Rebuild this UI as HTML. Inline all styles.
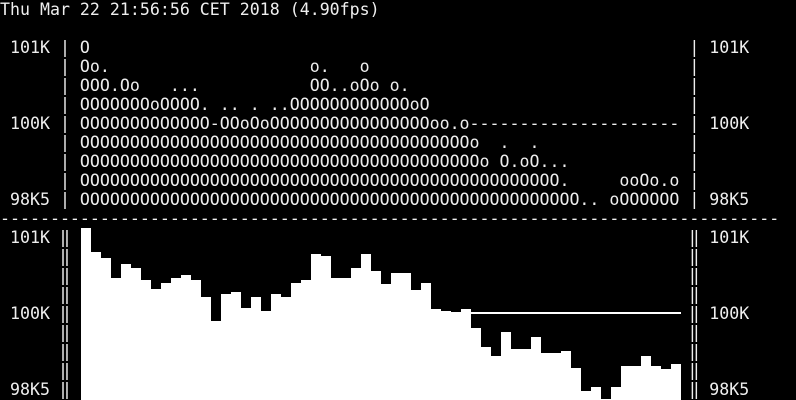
<!DOCTYPE html>
<html><head><meta charset="utf-8"><style>
html,body{margin:0;padding:0;background:#000;}
body{width:796px;height:400px;overflow:hidden;position:relative;}
pre{position:absolute;left:0;top:0;margin:0;font-family:"DejaVu Sans Mono","Liberation Mono",monospace;font-size:16.6px;line-height:19px;color:#eee;white-space:pre;}
.b{position:absolute;background:#fff;width:10px;}
.h{position:absolute;background:#fff;left:471px;width:210px;top:312px;height:2px;}
</style></head><body>
<pre>Thu Mar 22 21:56:56 CET 2018 (4.90fps)

 101K | O                                                            | 101K
      | Oo.                    o.   o                                |
      | OOO.Oo   ...           OO..oOo o.                            |
      | OOOOOOOoOOOO. .. . ..OOOOOOOOOOOOoO                          |
 100K | OOOOOOOOOOOOO-OOoOoOOOOOOOOOOOOOOOOoo.o--------------------- | 100K
      | OOOOOOOOOOOOOOOOOOOOOOOOOOOOOOOOOOOOOOOo  .  .               |
      | OOOOOOOOOOOOOOOOOOOOOOOOOOOOOOOOOOOOOOOOo O.oO...            |
      | OOOOOOOOOOOOOOOOOOOOOOOOOOOOOOOOOOOOOOOOOOOOOOOO.     ooOo.o |
 98K5 | OOOOOOOOOOOOOOOOOOOOOOOOOOOOOOOOOOOOOOOOOOOOOOOOOO.. oOOOOOO | 98K5
------------------------------------------------------------------------------
 101K ‖                                                              ‖ 101K
      ‖                                                              ‖
      ‖                                                              ‖
      ‖                                                              ‖
 100K ‖                                                              ‖ 100K
      ‖                                                              ‖
      ‖                                                              ‖
      ‖                                                              ‖
 98K5 ‖                                                              ‖ 98K5</pre>
<div id="bars"></div>
<div class="h"></div>
<script>
var t=[228,252,258,278,264,268,280,289,283,278,275,280,297,321,294,292,308,297,311,294,297,283,280,254,256,278,278,268,254,271,284,273,273,290,283,309,311,312,309,328,347,356,332,349,349,337,353,353,351,368,391,387,399,387,366,366,356,366,369,364];
var h='';for(var i=0;i<t.length;i++){h+='<div class="b" style="left:'+(81+10*i)+'px;top:'+t[i]+'px;height:'+(400-t[i])+'px"></div>';}
document.getElementById('bars').innerHTML=h;
</script>
</body></html>
